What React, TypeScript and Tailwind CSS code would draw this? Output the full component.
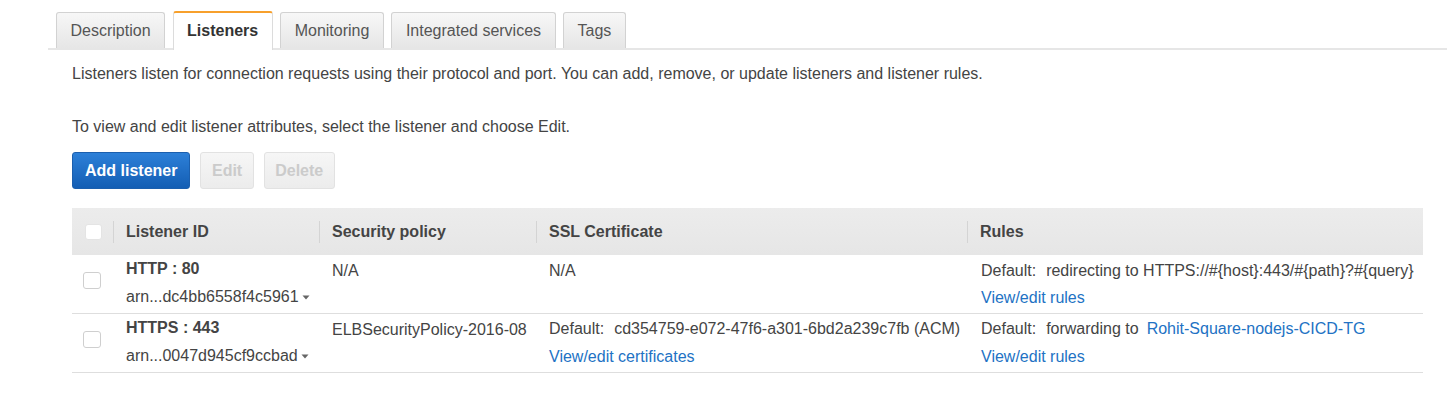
// App.tsx
// ELB listeners tab: tabs, intro text, action buttons and listeners table

const tabs = [
    { id: 'description', label: 'Description' },
    { id: 'listeners', label: 'Listeners' },
    { id: 'monitoring', label: 'Monitoring' },
    { id: 'integrated', label: 'Integrated services' },
    { id: 'tags', label: 'Tags' },
]

function Caret() {
    return (
        <svg width="8" height="5" viewBox="0 0 8 5" className="ml-[3px] inline-block">
            <path d="M0.5 0.5 L7.5 0.5 L4 4.5 Z" fill="#666" />
        </svg>
    )
}

function Checkbox({ header }: { header?: boolean }) {
    return (
        <div
            className={
                header
                    ? 'h-[16px] w-[17px] rounded-[3px] bg-white border border-[#e4e4e4]'
                    : 'h-[17px] w-[18px] rounded-[3px] bg-white border border-[#cfcfcf]'
            }
        />
    )
}

function Link({ children }: { children: React.ReactNode }) {
    return <span className="text-[#2272c4]">{children}</span>
}

function HeaderCell({ label }: { label: string }) {
    return (
        <div className="flex items-center h-full">
            <div className="h-[22px] w-px bg-[#d4d4d4]" />
            <span className="pl-[12px] font-bold">{label}</span>
        </div>
    )
}

export default function App() {
    const active = 'listeners'

    return (
        <div className="min-h-[409px] bg-white pl-[48px] pr-[2px] pt-[11px] font-['Liberation_Sans',Arial,sans-serif] text-[16px] text-[#444]">
            {/* Tabs */}
            <div className="flex items-end gap-[7.5px] border-b-2 border-[#e6e6e6] pl-[8px]">
                {tabs.map((tab) =>
                    tab.id === active ? (
                        <div
                            key={tab.id}
                            className="-mb-[2px] flex h-[39px] items-center rounded-t-[3px] border-x border-t-2 border-x-[#dcdcdc] border-t-[#f7a02c] bg-white px-[13.5px] pb-[1px] font-bold text-[#333]"
                        >
                            {tab.label}
                        </div>
                    ) : (
                        <div
                            key={tab.id}
                            className="flex h-[36px] items-center rounded-t-[3px] border-x border-t border-[#d2d2d2] bg-gradient-to-b from-[#f7f7f7] to-[#e6e6e6] px-[13.5px] text-[#555]"
                        >
                            {tab.label}
                        </div>
                    )
                )}
            </div>

            <div className="pl-[24px] pr-[24px]">
                <p className="mt-[14px] leading-[20px]">
                    Listeners listen for connection requests using their protocol and port. You can add, remove, or update listeners and listener rules.
                </p>
                <p className="mt-[33px] leading-[20px]">
                    To view and edit listener attributes, select the listener and choose Edit.
                </p>

                {/* Actions */}
                <div className="mt-[15px] flex gap-[10px]">
                    <button className="h-[37px] rounded-[3px] border border-[#1b5fae] bg-gradient-to-b from-[#2d80d8] to-[#135eb4] px-[12px] font-bold text-white">
                        Add listener
                    </button>
                    <button className="h-[37px] rounded-[3px] border border-[#e2e2e2] bg-gradient-to-b from-[#f6f6f6] to-[#ececec] px-[10.5px] font-bold text-[#cbcbcb]">
                        Edit
                    </button>
                    <button className="h-[37px] rounded-[3px] border border-[#e2e2e2] bg-gradient-to-b from-[#f6f6f6] to-[#ececec] px-[10.5px] font-bold text-[#cbcbcb]">
                        Delete
                    </button>
                </div>

                {/* Table */}
                <div className="mt-[19px]">
                    <div className="grid h-[47px] grid-cols-[41px_206px_217px_431px_456px] bg-gradient-to-b from-[#ececec] to-[#e6e6e6]">
                        <div className="flex items-center pl-[13px]">
                            <Checkbox header />
                        </div>
                        <HeaderCell label="Listener ID" />
                        <HeaderCell label="Security policy" />
                        <HeaderCell label="SSL Certificate" />
                        <HeaderCell label="Rules" />
                    </div>

                    {/* HTTP row */}
                    <div className="grid grid-cols-[41px_206px_217px_431px_456px] border-b border-[#dedede] pb-[1px] leading-[28px]">
                        <div className="pl-[11px] pt-[17px]">
                            <Checkbox />
                        </div>
                        <div className="pl-[13px]">
                            <div className="font-bold">HTTP : 80</div>
                            <div className="flex items-center">arn...dc4bb6558f4c5961<Caret /></div>
                        </div>
                        <div className="pl-[13px] pt-[2px]">N/A</div>
                        <div className="pl-[13px] pt-[2px]">N/A</div>
                        <div className="pl-[14px] pt-[2px]">
                            <div>
                                <span className="mr-[10px]">Default:</span>redirecting to HTTPS://#{'{'}host{'}'}:443/#{'{'}path{'}'}?#{'{'}query{'}'}
                            </div>
                            <div className="-mt-[1px]">
                                <Link>View/edit rules</Link>
                            </div>
                        </div>
                    </div>

                    {/* HTTPS row */}
                    <div className="grid grid-cols-[41px_206px_217px_431px_456px] border-b border-[#dedede] pb-[1px] leading-[28px]">
                        <div className="pl-[11px] pt-[17px]">
                            <Checkbox />
                        </div>
                        <div className="pl-[13px]">
                            <div className="font-bold">HTTPS : 443</div>
                            <div className="flex items-center">arn...0047d945cf9ccbad<Caret /></div>
                        </div>
                        <div className="pl-[13px] pt-[2px]">ELBSecurityPolicy-2016-08</div>
                        <div className="pl-[13px] pt-[1px]">
                            <div>
                                <span className="mr-[10px]">Default:</span>cd354759-e072-47f6-a301-6bd2a239c7fb (ACM)
                            </div>
                            <div>
                                <Link>View/edit certificates</Link>
                            </div>
                        </div>
                        <div className="pl-[14px] pt-[1px]">
                            <div>
                                <span className="mr-[10px]">Default:</span>
                                <span className="mr-[8px]">forwarding to</span>
                                <Link>Rohit-Square-nodejs-CICD-TG</Link>
                            </div>
                            <div>
                                <Link>View/edit rules</Link>
                            </div>
                        </div>
                    </div>
                </div>
            </div>
        </div>
    )
}
